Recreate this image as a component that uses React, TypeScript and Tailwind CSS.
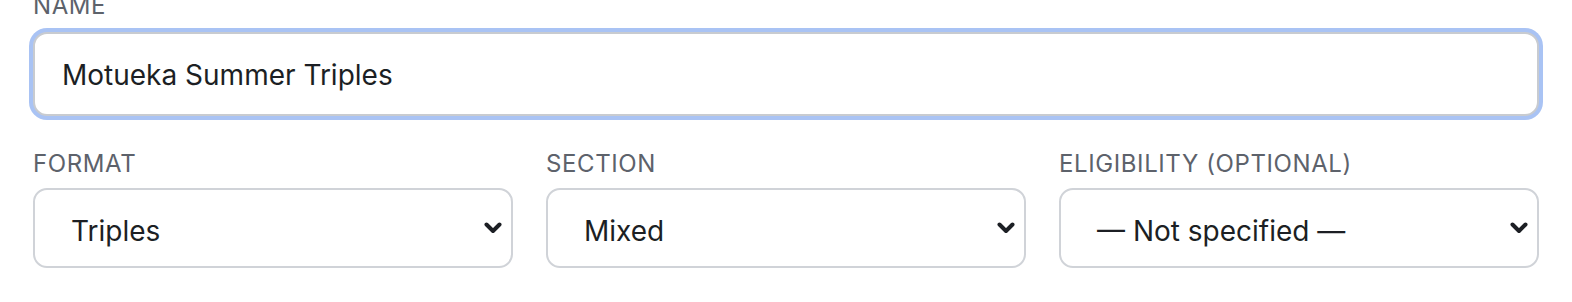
const labelCls =
    "block text-[24px] leading-[32px] tracking-[0.025em] uppercase text-[#5d626b]"

function Chevron() {
    return (
        <svg width="18" height="12" viewBox="0 0 18 12" fill="none" className="shrink-0">
            <path d="M2.5 2.5 L9 9 L15.5 2.5" stroke="#1c1f24" strokeWidth="4" strokeLinecap="round" strokeLinejoin="round" />
        </svg>
    )
}

function SelectBox({ label, value }: { label: string; value: string }) {
    return (
        <div className="flex flex-col gap-2">
            <span className={labelCls}>{label}</span>
            <div className="h-[80px] flex items-center justify-between rounded-[14px] border-2 border-[#d0d3d8] bg-white pl-[36px] pr-[9px]">
                <span className="pt-[5px] text-[28px] text-[#1c1f24]">{value}</span>
                <Chevron />
            </div>
        </div>
    )
}

export default function App() {
    return (
        <main
            className="w-[1572px] h-[302px] bg-white overflow-hidden px-[33px]"
            style={{ fontFamily: 'Inter, "Noto Sans", sans-serif' }}
        >
            <div className="-mt-[10px] flex flex-col gap-[10px]">
                <span className={labelCls}>Name</span>
                <div className="h-[84px] flex items-center rounded-[14px] border-2 border-[#c8cbd0] bg-white px-[27px] shadow-[0_0_0_4px_#a9c3f4]">
                    <span className="pt-[2px] text-[28px] text-[#1c1f24]">Motueka Summer Triples</span>
                </div>
            </div>

            <div className="mt-[32px] grid grid-cols-3 gap-[33px]">
                <SelectBox label="Format" value="Triples" />
                <SelectBox label="Section" value="Mixed" />
                <SelectBox label="Eligibility (optional)" value="— Not specified —" />
            </div>
        </main>
    )
}
